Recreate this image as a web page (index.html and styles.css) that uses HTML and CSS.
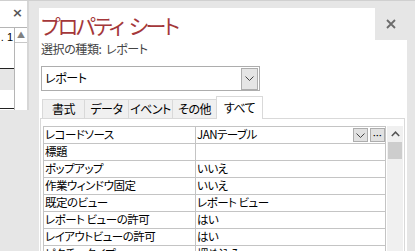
FILE: index.html
```html
<!DOCTYPE html>
<html lang="ja">
<head>
  <meta charset="UTF-8">
  <title>プロパティ シート</title>
  <link rel="stylesheet" href="styles.css">
</head>
<body>
  <div class="screen">
    <!-- 左側の別ウィンドウ -->
    <div class="side">
      <div class="side-top"><span class="side-x">×</span></div>
      <div class="side-body">
        <div class="side-list">
          <div class="side-val">. 1</div>
          <div class="side-line"></div>
          <div class="side-gray"></div>
          <div class="side-line"></div>
        </div>
        <div class="side-scroll">
          <div class="side-up">▲</div>
        </div>
      </div>
    </div>

    <div class="sheet">
      <div class="head">
        <h1 class="title">プロパティ<span class="gap">シート</span></h1>
        <div class="close">
          <svg width="10" height="10" viewBox="0 0 10 10"><path d="M1 1L9 9M9 1L1 9" stroke="#6b6b6b" stroke-width="1.8"/></svg>
        </div>
      </div>
      <div class="kind">選択の種類:&nbsp; レポート</div>

      <div class="picker">
        <span>レポート</span>
        <div class="picker-btn">
          <svg width="9" height="5" viewBox="0 0 9 5"><path d="M0.5 0.5L4.5 4.5L8.5 0.5" stroke="#444" fill="none"/></svg>
        </div>
      </div>

      <div class="tabs">
        <div class="tab w43">書式</div>
        <div class="tab w45">データ</div>
        <div class="tab w45">イベント</div>
        <div class="tab w45">その他</div>
        <div class="tab on">すべて</div>
      </div>

      <div class="panel">
        <div class="grid">
          <div class="row">
            <div class="cell name">レコードソース</div>
            <div class="cell value first">
              <span>JANテーブル</span>
              <span class="btns">
                <span class="mini">
                  <svg width="9" height="5" viewBox="0 0 9 5"><path d="M0.5 0.5L4.5 4.5L8.5 0.5" stroke="#444" fill="none"/></svg>
                </span>
                <span class="mini dots">•••</span>
              </span>
            </div>
          </div>
          <div class="row"><div class="cell name">標題</div><div class="cell value"></div></div>
          <div class="row"><div class="cell name">ポップアップ</div><div class="cell value">いいえ</div></div>
          <div class="row"><div class="cell name">作業ウィンドウ固定</div><div class="cell value">いいえ</div></div>
          <div class="row"><div class="cell name">既定のビュー</div><div class="cell value">レポート ビュー</div></div>
          <div class="row"><div class="cell name">レポート ビューの許可</div><div class="cell value">はい</div></div>
          <div class="row"><div class="cell name">レイアウトビューの許可</div><div class="cell value">はい</div></div>
          <div class="row"><div class="cell name">ピクチャ タイプ</div><div class="cell value">埋め込み</div></div>
        </div>
        <div class="vscroll">
          <div class="up">
            <svg width="9" height="6" viewBox="0 0 9 6"><path d="M0.8 5L4.5 1.2L8.2 5" stroke="#555" stroke-width="1.5" fill="none"/></svg>
          </div>
          <div class="thumb"></div>
        </div>
      </div>
    </div>
  </div>
</body>
</html>
```

FILE: styles.css
```css
* {
  box-sizing: border-box;
}
body {
  margin: 0;
  background: #e6e6e6;
  font-family: "Noto Sans CJK JP", "Liberation Sans", sans-serif;
  font-size: 12px;
  font-feature-settings: "palt";
  color: #000;
}
.screen {
  display: flex;
  align-items: flex-start;
  width: 415px;
  height: 251px;
  overflow: hidden;
  border-top: 1px solid #d0d0d0;
}

/* 左側 */
.side {
  width: 29px;
  flex: none;
  background: #fff;
  border-right: 2px solid #d6d6d6;
}
.side-top {
  height: 26px;
  text-align: right;
  padding-right: 4px;
}
.side-x {
  font-family: "DejaVu Sans", sans-serif;
  font-size: 13px;
  line-height: 24px;
  color: #555;
  font-weight: bold;
}
.side-body {
  display: flex;
  border-top: 1px solid #b5b5b5;
}
.side-list {
  width: 14px;
}
.side-val {
  height: 40px;
  font-family: "Liberation Sans", sans-serif;
  font-size: 11px;
  line-height: 14px;
  text-align: right;
  padding: 2px 1px 0 0;
}
.side-line {
  height: 1px;
  background: #222;
}
.side-gray {
  height: 39px;
  background: #e6e6e6;
  border-bottom: 18px solid #fff;
}
.side-scroll {
  flex: 1;
  border-left: 1px solid #b5b5b5;
  height: 82px;
}
.side-up {
  height: 15px;
  border-bottom: 1px solid #c8c8c8;
  font-size: 8px;
  line-height: 14px;
  text-align: center;
  color: #808080;
}

/* プロパティ シート */
.sheet {
  width: 368px;
  margin: 7px 0 0 10px;
  height: 260px;
  background: #fff;
}
.head {
  display: flex;
  height: 33px;
}
.title {
  flex: 1;
  margin: 0;
  padding-left: 2px;
  font-size: 21px;
  font-weight: normal;
  line-height: 34px;
  letter-spacing: -2.4px;
  color: #a4373a;
  white-space: nowrap;
}
.title .gap {
  margin-left: 6px;
}
.close {
  width: 32px;
  height: 32px;
  background: #e6e6e6;
  display: flex;
  align-items: center;
  justify-content: center;
}
.kind {
  padding-left: 2px;
  line-height: 15px;
  letter-spacing: -0.4px;
  color: #444;
}
.picker {
  width: 219px;
  height: 25px;
  margin: 10px 0 0 2px;
  border: 1px solid #adadad;
  display: flex;
  align-items: center;
  justify-content: space-between;
  padding: 0 1px 2px 3px;
  letter-spacing: -0.4px;
}
.picker-btn {
  width: 17px;
  height: 22px;
  margin-top: 2px;
  background: #e5e5e5;
  border: 1px solid #adadad;
  display: flex;
  align-items: center;
  justify-content: center;
}

/* タブ */
.tabs {
  display: flex;
  align-items: flex-end;
  height: 22px;
  margin: 5px 0 0 3px;
}
.tab {
  height: 19px;
  margin-right: -1px;
  border: 1px solid #d9d9d9;
  border-bottom: none;
  background: #f0f0f0;
  text-align: center;
  font-size: 12px;
  letter-spacing: -0.5px;
  line-height: 18px;
  white-space: nowrap;
  overflow: hidden;
}
.w43 { width: 43px; }
.w45 { width: 45px; }
.tab.on {
  width: 47px;
  height: 23px;
  margin-bottom: -1px;
  background: #fff;
  position: relative;
  z-index: 1;
  line-height: 21px;
}

/* 一覧 */
.panel {
  display: flex;
  gap: 1px;
  width: 365px;
  height: 140px;
  margin-left: 1px;
  border: 1px solid #d9d9d9;
  padding: 7px 0 0 2px;
}
.grid {
  width: 343px;
  border-top: 1px solid #c4c4c4;
  border-left: 1px solid #c4c4c4;
}
.row {
  display: grid;
  grid-template-columns: 152px 190px;
}
.cell {
  height: 17px;
  border-right: 1px solid #c4c4c4;
  border-bottom: 1px solid #c4c4c4;
  font-size: 11.5px;
  letter-spacing: -0.5px;
  line-height: 15px;
  padding-left: 1px;
  white-space: nowrap;
  overflow: hidden;
}
.first {
  display: flex;
  justify-content: space-between;
}
.btns {
  display: flex;
  gap: 2px;
  padding-top: 1px;
}
.mini {
  width: 15px;
  height: 14px;
  background: #e1e1e1;
  border: 1px solid #adadad;
  display: flex;
  align-items: center;
  justify-content: center;
}
.dots {
  font-family: "DejaVu Sans", sans-serif;
  font-size: 4px;
  letter-spacing: 0.5px;
  font-weight: bold;
}
.vscroll {
  width: 16px;
  background: #f0f0f0;
}
.up {
  height: 16px;
  display: flex;
  align-items: center;
  justify-content: center;
}
.thumb {
  height: 17px;
  margin: 0 1px;
  background: #cdcdcd;
}
```
